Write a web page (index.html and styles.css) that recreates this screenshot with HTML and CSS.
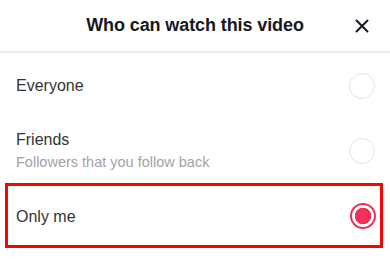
FILE: index.html
```html
<!DOCTYPE html>
<html lang="en">
<head>
<meta charset="utf-8">
<title>Who can watch this video</title>
<link rel="stylesheet" href="styles.css">
</head>
<body>
<div class="sheet">
  <header class="header">
    <span class="spacer"></span>
    <h1 class="title">Who can watch this video</h1>
    <button class="close" aria-label="Close">
      <svg width="14" height="14" viewBox="0 0 14 14"><path d="M1.5 1.5 L12.5 12.5 M12.5 1.5 L1.5 12.5" stroke="#161823" stroke-width="2" stroke-linecap="round"/></svg>
    </button>
  </header>
  <ul class="options">
    <li class="option">
      <div class="label"><span class="name">Everyone</span></div>
      <span class="radio"></span>
    </li>
    <li class="option">
      <div class="label"><span class="name">Friends</span><span class="desc">Followers that you follow back</span></div>
      <span class="radio"></span>
    </li>
    <li class="option option-selected">
      <div class="label"><span class="name">Only me</span></div>
      <span class="radio radio-on"></span>
    </li>
  </ul>
</div>
</body>
</html>
```
FILE: styles.css
```css
html, body {
  margin: 0;
  padding: 0;
  background: #ffffff;
}
body {
  font-family: "Liberation Sans", Arial, sans-serif;
  color: #333333;
}
.sheet {
  width: 390px;
}
.header {
  height: 51px;
  display: grid;
  grid-template-columns: 1fr auto 1fr;
  align-items: center;
  border-bottom: 2px solid #ececec;
}
.title {
  margin: 0;
  font-size: 18px;
  font-weight: bold;
  color: #161823;
  letter-spacing: -0.1px;
}
.close {
  justify-self: end;
  margin-right: 21px;
  padding: 0;
  border: 0;
  background: none;
  width: 14px;
  height: 14px;
  display: flex;
}
.options {
  list-style: none;
  margin: 0;
  padding: 0;
}
.option {
  display: flex;
  align-items: center;
  justify-content: space-between;
  height: 65px;
  padding: 0 15px 0 16px;
}
.label {
  display: flex;
  flex-direction: column;
}
.name {
  font-size: 16px;
  color: #333333;
}
.desc {
  font-size: 14.5px;
  color: #a3a3a6;
  margin-top: 5px;
}
.radio {
  width: 26px;
  height: 26px;
  box-sizing: border-box;
  border: 1.5px solid #e3e3e3;
  border-radius: 50%;
}
.option-selected {
  height: 59px;
  margin: 0 7px 0 5px;
  padding: 0 4px 0 8px;
  border: 3px solid #ff0000;
}
.option-selected .label {
  padding-top: 3px;
}
.radio-on {
  border: 2px solid #ee2e58;
  background: radial-gradient(circle, #f42f59 0, #f42f59 8px, #ffffff 8.5px);
}
```
